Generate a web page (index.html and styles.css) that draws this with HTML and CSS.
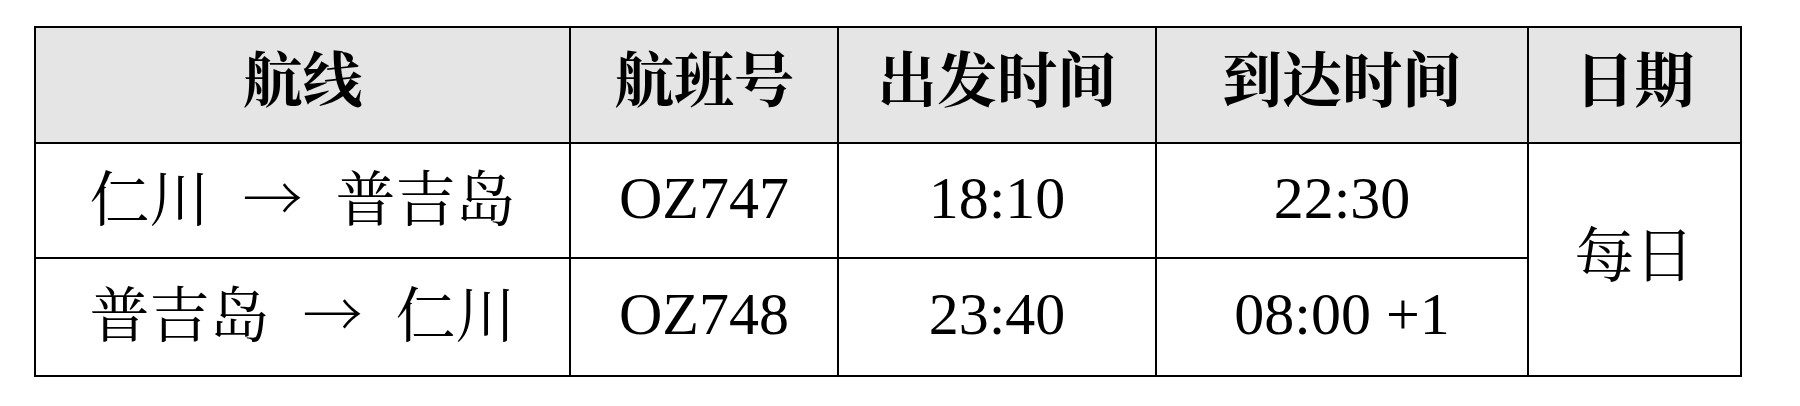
FILE: index.html
```html
<!DOCTYPE html>
<html lang="zh-CN">
<head>
<meta charset="utf-8">
<title>航班时刻表</title>
<link rel="stylesheet" href="styles.css">
</head>
<body>
<table class="schedule">
  <colgroup>
    <col class="c-route">
    <col class="c-flight">
    <col class="c-dep">
    <col class="c-arr">
    <col class="c-date">
  </colgroup>
  <thead>
    <tr class="head-row">
      <th>航线</th>
      <th>航班号</th>
      <th>出发时间</th>
      <th>到达时间</th>
      <th>日期</th>
    </tr>
  </thead>
  <tbody>
    <tr class="row-1">
      <td>仁川 <span class="arrow">→</span> 普吉岛</td>
      <td>OZ747</td>
      <td>18:10</td>
      <td>22:30</td>
      <td rowspan="2">每日</td>
    </tr>
    <tr class="row-2">
      <td>普吉岛 <span class="arrow">→</span> 仁川</td>
      <td>OZ748</td>
      <td>23:40</td>
      <td>08:00 +1</td>
    </tr>
  </tbody>
</table>
</body>
</html>
```
FILE: styles.css
```css
html, body {
  margin: 0;
  padding: 0;
  background: #ffffff;
}

body {
  padding: 26px 0 0 34px;
}

.schedule {
  border-collapse: collapse;
  table-layout: fixed;
  width: 1708px;
  font-family: "Liberation Serif", "Noto Serif CJK SC", "Noto Sans CJK SC", serif;
  color: #000;
}

.c-route { width: 535px; }
.c-flight { width: 268px; }
.c-dep { width: 318px; }
.c-arr { width: 372px; }
.c-date { width: 213px; }

.schedule th,
.schedule td {
  border: 2px solid #000;
  text-align: center;
  vertical-align: middle;
  padding: 0 0 6px 0;
  font-size: 60px;
  line-height: 1;
  white-space: nowrap;
}

.schedule th {
  background: #e5e5e5;
  font-weight: bold;
}

.schedule td {
  font-weight: normal;
}

.arrow {
  display: inline-block;
  margin: 0 18px;
  font-family: "Noto Serif CJK SC", "Noto Sans CJK SC", sans-serif;
  font-weight: 300;
}

.head-row { height: 116px; }
.row-1 { height: 115px; }
.row-2 { height: 118px; }
```
